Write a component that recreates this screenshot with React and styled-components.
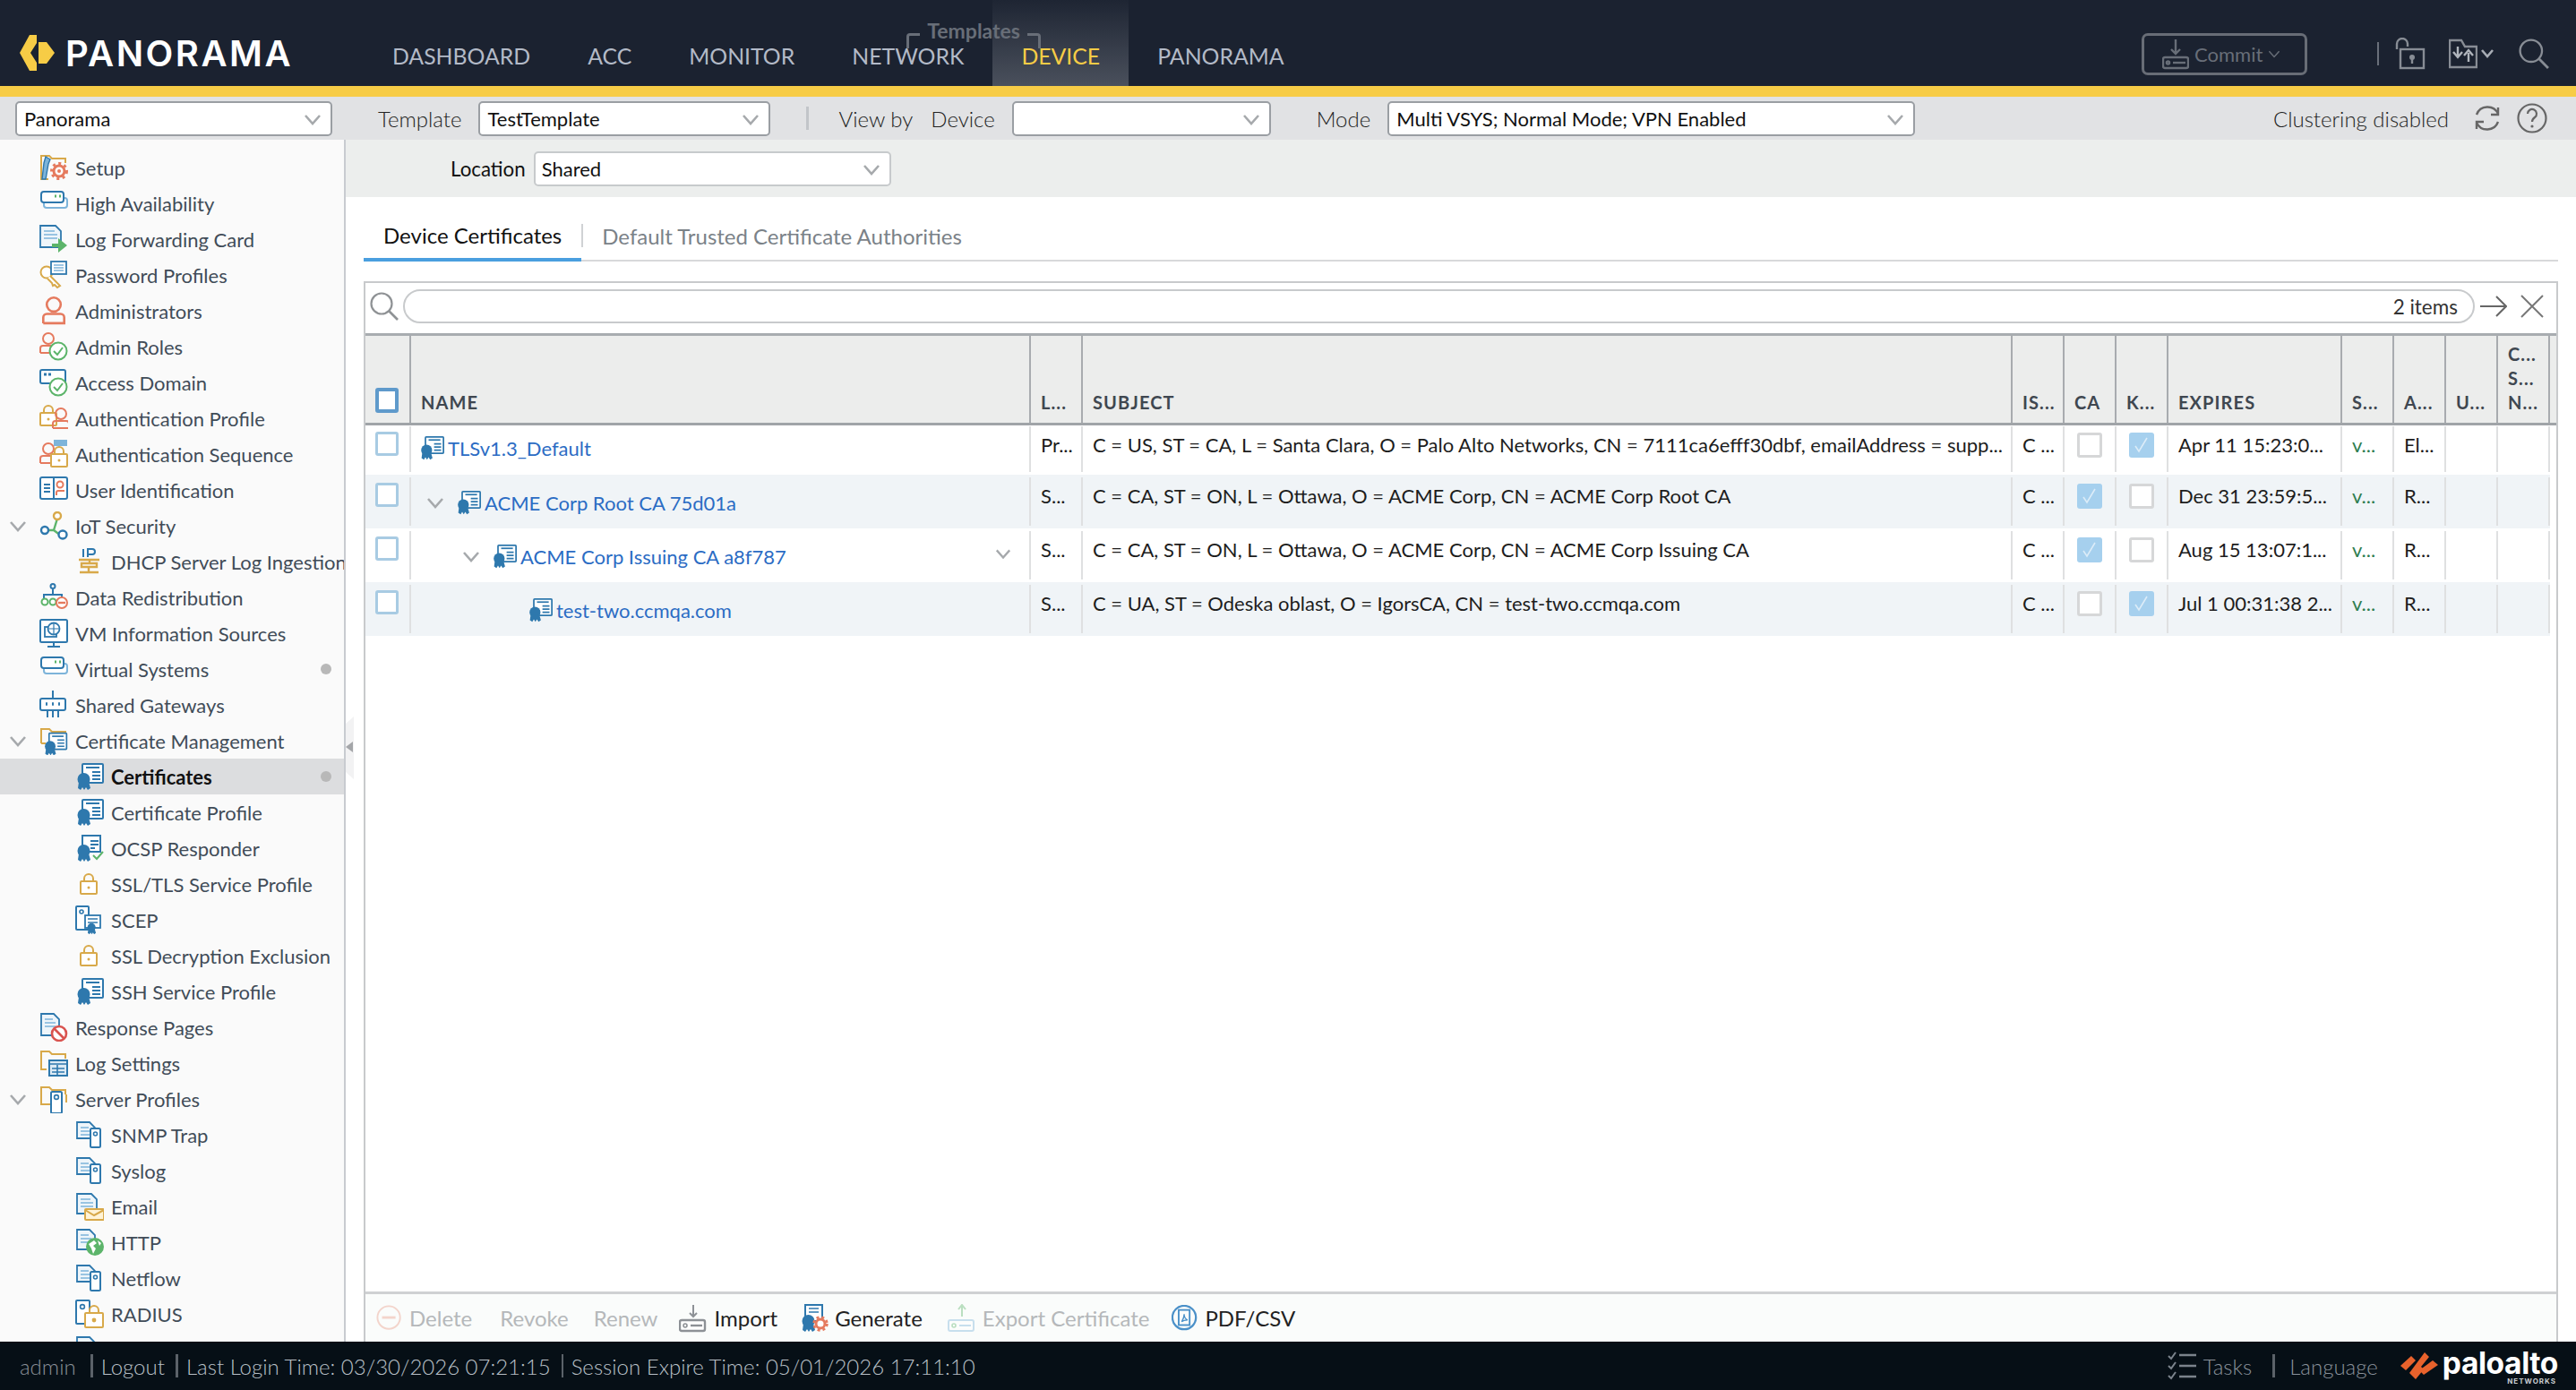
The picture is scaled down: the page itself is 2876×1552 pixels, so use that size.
import React from 'react';
import styled, { createGlobalStyle } from 'styled-components';

const BLUE = '#2e78ad';
const SKY = '#7db4da';
const AMBER = '#d8a94a';
const RED = '#e57a5e';
const GREEN = '#5cb46a';

const GlobalStyle = createGlobalStyle`
    html, body, #root {
        margin: 0;
        height: 100%;
    }
    body {
        font-family: Lato, "Open Sans", sans-serif;
        font-size: 22px;
        color: #222;
        background: #fff;
        overflow: hidden;
    }
    * {
        box-sizing: border-box;
    }
`;

const Page = styled.div`
    display: flex;
    flex-direction: column;
    height: 100vh;
`;

/* top bar */
const TopBar = styled.header`
    display: flex;
    align-items: stretch;
    height: 108px;
    flex: none;
    background: #1b2230;
    border-bottom: 12px solid #f7cc46;
`;

const Brand = styled.div`
    display: flex;
    align-items: center;
    width: 406px;
    padding: 22px 0 0 22px;
    gap: 11px;
    flex: none;
`;

const BrandName = styled.span`
    font-family: Inter, sans-serif;
    font-weight: 600;
    font-size: 40px;
    letter-spacing: 2.5px;
    color: #fff;
`;

const Nav = styled.nav`
    display: flex;
    align-items: stretch;
`;

const NavTab = styled.div`
    position: relative;
    display: flex;
    align-items: flex-end;
    padding: 0 32px 18px;
    font-size: 24.8px;
    line-height: 30px;
    color: ${p => (p.$active ? '#f7cc46' : '#b3bac7')};
    background: ${p => (p.$active ? 'linear-gradient(#1e2533, #4a505c)' : 'none')};
`;

const TemplatesTag = styled.span`
    position: absolute;
    z-index: 2;
    left: 93px;
    top: 21px;
    display: flex;
    align-items: flex-start;
    gap: 8px;
    font-size: 23px;
    font-weight: 700;
    line-height: 26px;
    color: #686e78;
    white-space: nowrap;
    &::before, &::after {
        content: '';
        width: 12px;
        height: 14px;
        margin-top: 16px;
        border-top: 3px solid #686e78;
    }
    &::before {
        border-left: 3px solid #686e78;
        border-top-left-radius: 4px;
    }
    &::after {
        border-right: 3px solid #686e78;
        border-top-right-radius: 4px;
    }
`;

const TopActions = styled.div`
    margin-left: auto;
    display: flex;
    align-items: center;
    padding: 24px 30px 0 0;
`;

const CommitButton = styled.button`
    display: flex;
    align-items: center;
    gap: 6px;
    width: 185px;
    height: 47px;
    padding: 0 0 0 20px;
    margin-right: 78px;
    background: none;
    border: 3px solid #686d76;
    border-radius: 7px;
    font: inherit;
    font-size: 22px;
    color: #686e78;
`;

const TopDivider = styled.span`
    width: 2px;
    height: 26px;
    margin-right: 18px;
    background: #6a707a;
`;

const LockIcon = styled.svg`
    flex: none;
    display: block;
    margin-right: 26px;
`;

const MenuCaret = styled.svg`
    flex: none;
    display: block;
    margin: 0 26px 0 2px;
`;

/* context toolbar */
const ContextBar = styled.div`
    display: flex;
    align-items: center;
    height: 48px;
    flex: none;
    padding-left: 17px;
    background: #e1e2e4;
`;

const FieldLabel = styled.span`
    margin: 0 ${p => p.$mr || 0}px 0 ${p => p.$ml || 0}px;
    font-size: 24px;
    font-weight: 300;
    color: #222;
    white-space: nowrap;
`;

const DarkLabel = styled.span`
    font-size: 22.3px;
    color: #111;
    white-space: nowrap;
`;

const Select = styled.div`
    position: relative;
    display: flex;
    align-items: center;
    width: ${p => p.$w}px;
    height: 39px;
    margin-left: ${p => p.$ml || 0}px;
    padding-left: ${p => p.$soft ? 7 : 8}px;
    background: #fff;
    border: 2px solid ${p => (p.$soft ? '#c7cacc' : '#9a9ea3')};
    border-radius: 5px;
    color: #111;
    svg {
        position: absolute;
        right: 10px;
        top: 8px;
    }
`;

const ContextRight = styled.div`
    margin-left: auto;
    display: flex;
    align-items: center;
    gap: 17px;
    padding-right: 32px;
`;

const VerticalRule = styled.span`
    width: 3px;
    height: 26px;
    margin-left: 40px;
    background: #c2c5c9;
`;

/* main */
const Main = styled.div`
    flex: 1;
    display: flex;
    min-height: 0;
`;

const Sidebar = styled.aside`
    width: 386px;
    flex: none;
    padding-top: 11px;
    overflow: hidden;
    background: #fafafa;
    border-right: 2px solid #c8cbd0;
`;

const TreeRow = styled.div`
    position: relative;
    display: flex;
    align-items: center;
    gap: 8px;
    height: 40px;
    padding-left: ${p => (p.$level === 2 ? 84 : 44)}px;
    white-space: nowrap;
    overflow: hidden;
    color: ${p => (p.$selected ? '#111' : '#414c58')};
    font-weight: ${p => (p.$selected ? 700 : 400)};
    background: ${p => (p.$selected ? '#dcdddf' : 'none')};
`;

const Twist = styled.span`
    position: absolute;
    left: 10px;
    top: 10px;
    display: flex;
`;

const Dot = styled.span`
    position: absolute;
    right: 14px;
    top: 14px;
    width: 12px;
    height: 12px;
    border-radius: 50%;
    background: #b8b8b8;
`;

const Content = styled.section`
    position: relative;
    flex: 1;
    min-width: 0;
    display: flex;
    flex-direction: column;
`;

const CollapseHandle = styled.div`
    position: absolute;
    left: 0;
    top: 644px;
    width: 9px;
    height: 70px;
    background: #f2f2f3;
    clip-path: polygon(0 8px, 100% 0, 100% 100%, 0 calc(100% - 8px));
    &::after {
        content: '';
        position: absolute;
        left: 0;
        top: 28px;
        border: 6px solid transparent;
        border-left: 0;
        border-right: 8px solid #a4a6a9;
    }
`;

const LocationBar = styled.div`
    display: flex;
    align-items: center;
    gap: 9px;
    height: 64px;
    flex: none;
    padding-left: 117px;
    background: #eceeed;
`;

const TabStrip = styled.div`
    display: flex;
    align-items: stretch;
    height: 72px;
    flex: none;
    margin: 0 20px 22px 20px;
    padding-top: 14px;
    border-bottom: 2px solid #d8d9da;
    font-size: 24px;
`;

const Tab = styled.div`
    position: relative;
    display: flex;
    align-items: center;
    height: 55px;
    padding: 3px ${p => (p.$active ? 22 : 21)}px 0;
    color: ${p => (p.$active ? '#111' : '#7b8288')};
    ${p => p.$active && `
        border-bottom: 4px solid #4a9fdf;
        margin-bottom: -2px;
        height: 58px;
    `}
`;

const TabRule = styled.span`
    width: 2px;
    height: 26px;
    margin-top: 16px;
    background: #d0d2d4;
`;

const Panel = styled.div`
    flex: 1;
    min-height: 0;
    display: flex;
    flex-direction: column;
    margin: 0 20px;
    border: 2px solid #c8cacc;
    border-bottom: 0;
`;

const SearchBar = styled.div`
    display: flex;
    align-items: center;
    height: 56px;
    flex: none;
    padding: 0 0 4px 5px;
`;

const SearchField = styled.div`
    flex: 1;
    display: flex;
    align-items: center;
    justify-content: flex-end;
    height: 38px;
    margin-left: 5px;
    padding-right: 17px;
    border: 2px solid #c8cacc;
    border-radius: 19px;
    font-size: 22.5px;
    color: #333;
`;

const SearchTools = styled.div`
    display: flex;
    align-items: center;
    gap: 15px;
    padding: 0 14px 0 6px;
`;

const COLS = '51px 692px 58px 1038px 58px 58px 58px 194px 58px 58px 58px 58px 1fr';

const HeadRow = styled.div`
    display: grid;
    grid-template-columns: ${COLS};
    height: 103px;
    flex: none;
    background: #ecedec;
    border-top: 3px solid #a8acb0;
    border-bottom: 3px solid #a0a4a8;
`;

const HeadCell = styled.div`
    display: flex;
    align-items: flex-end;
    padding: 0 8px 9px 11px;
    border-right: 2px solid #a8abaf;
    font-size: 20px;
    font-weight: 700;
    letter-spacing: 1.1px;
    line-height: 27px;
    color: #3f4750;
    &:last-child {
        border-right: 0;
    }
`;

const HeadCheckCell = styled(HeadCell)`
    padding: 0 0 11px 11px;
`;

const Rows = styled.div`
    flex: 1;
    min-height: 0;
    margin-right: 7px;
`;

const Row = styled.div`
    display: grid;
    grid-template-columns: ${COLS};
    height: ${p => (p.$first ? 55 : 60)}px;
    padding: ${p => (p.$first ? 1 : 3)}px 0 3px;
    background: ${p => (p.$even ? '#f0f4f7' : '#fff')};
`;

const Cell = styled.div`
    padding: 6px 6px 0 11px;
    border-right: 2px solid #dfe0e1;
    line-height: 30px;
    color: ${p => p.$color || '#1d1d1d'};
    white-space: nowrap;
    overflow: hidden;
    text-overflow: ellipsis;
`;

const CheckCell = styled(Cell)`
    padding: 6px 0 0 11px;
`;

const BoolCell = styled(Cell)`
    display: flex;
    justify-content: center;
    padding: 7px 0 0;
`;

const Checkbox = styled.div`
    width: 26px;
    height: 27px;
    border: 3px solid ${p => p.$tone || '#a8cbe3'};
    border-radius: 3px;
    background: #fff;
`;

const HeadCheckbox = styled(Checkbox)`
    height: 28px;
    border: 4px solid #5f9acb;
`;

const Flag = styled.div`
    display: flex;
    align-items: center;
    justify-content: center;
    width: 28px;
    height: 28px;
    border-radius: 3px;
    border: ${p => (p.$on ? '0' : '3px solid #d6d7d8')};
    background: ${p => (p.$on ? '#a6d0ee' : '#fff')};
`;

const NameCell = styled.div`
    display: flex;
    align-items: center;
    height: 30px;
    margin-top: ${p => p.$top}px;
    padding: 0 20px 0 9px;
    gap: 4px;
    color: #2b6cc4;
    white-space: nowrap;
`;

const NameWrap = styled.div`
    border-right: 2px solid #dfe0e1;
`;

const Indent = styled.span`
    display: flex;
    justify-content: flex-end;
    width: ${p => p.$w}px;
    padding-right: 9px;
    flex: none;
`;

const RowMenu = styled.span`
    margin-left: auto;
    display: flex;
    margin-top: -6px;
`;

const ActionBar = styled.div`
    display: flex;
    align-items: center;
    gap: 27px;
    height: 56px;
    flex: none;
    padding: 0 0 0 12px;
    background: #fafcfb;
    border-top: 3px solid #cfd1d3;
    font-size: 24px;
`;

const Action = styled.div`
    display: flex;
    align-items: center;
    gap: 7px;
    margin-right: ${p => p.$mr || 0}px;
    color: ${p => (p.$off ? '#b5b8ba' : '#222')};
`;

/* footer */
const Footer = styled.footer`
    display: flex;
    align-items: center;
    height: 54px;
    flex: none;
    padding: 0 20px 0 22px;
    background: #060f16;
    color: #b9c0c7;
    font-size: 24px;
    font-weight: 300;
`;

const FootRule = styled.span`
    width: ${p => p.$w || 3}px;
    height: 26px;
    margin: 0 ${p => p.$right || 9}px 0 ${p => p.$left || 12}px;
    background: #5b6269;
`;

const UserName = styled.span`
    color: #8a9098;
`;

const FootRight = styled.div`
    margin-left: auto;
    display: flex;
    align-items: center;
    color: #8a929b;
`;

const TasksLabel = styled.span`
    margin-left: 8px;
`;

const LanguageLabel = styled.span`
    margin-right: 25px;
`;

const PaloWord = styled.span`
    position: relative;
    margin-left: 5px;
    font-family: Inter, sans-serif;
    font-weight: 700;
    font-size: 33.5px;
    letter-spacing: -0.4px;
    line-height: 34px;
    color: #fff;
    padding-bottom: 6px;
    small {
        position: absolute;
        right: 2px;
        bottom: -1px;
        font-size: 8px;
        line-height: 8px;
        letter-spacing: 1px;
        color: #c9ccd0;
    }
`;

const Svg = styled.svg`
    flex: none;
    display: block;
`;

const seal = (c = BLUE) => (
    <g fill={c}>
        <circle cx="9.5" cy="19" r="7" />
        <path d="M4 22h11l2 7-3 2-2-3-2 3-2-3-2 3-3-2z" />
    </g>
);

const doc = (x, y, w, h) => (
    <g stroke={BLUE} strokeWidth="1.8" fill="#eef5fa">
        <path d={`M${x} ${y + h}V${y}h${w - 6}l6 6v${h - 6}z`} />
        <path d={`M${x + 4} ${y + 6}h${w - 11}M${x + 4} ${y + 10}h${w - 8}M${x + 4} ${y + 14}h${w - 8}`} strokeWidth="1.5" stroke={SKY} />
    </g>
);

const folder = <path d="M2 19V3h9l3 3h15v5" stroke={AMBER} strokeWidth="2" fill="none" />;

const cert = (
    <>
        <rect x="8" y="2" width="23" height="21" rx="1" fill="#fff" stroke={BLUE} strokeWidth="2" />
        <path d="M12 6h15" stroke={BLUE} strokeWidth="2" />
        <path d="M19 11h9M19 15h9M19 19h9" stroke={BLUE} strokeWidth="1.8" />
        {seal()}
    </>
);

const lockShape = (x, y, c = AMBER) => (
    <g stroke={c} strokeWidth="2" fill="#fff">
        <rect x={x} y={y + 8} width="18" height="14" rx="1" />
        <path d={`M${x + 4} ${y + 8}V${y + 5}a5 5 0 0 1 10 0v3`} fill="none" />
        <circle cx={x + 9} cy={y + 15} r="1.5" fill={c} stroke="none" />
    </g>
);

const person = (x, y, c = RED) => (
    <g stroke={c} strokeWidth="2" fill="none">
        <circle cx={x + 10} cy={y + 6} r="6" />
        <path d={`M${x + 1} ${y + 22}v-5a3 3 0 0 1 3-3h12a3 3 0 0 1 3 3v5h-6M${x + 1} ${y + 22}h12`} />
    </g>
);

const checkBadge = (
    <g>
        <circle cx="21" cy="21" r="9.5" fill="#fff" stroke={GREEN} strokeWidth="2" />
        <path d="M16 21l4 4 6-8" stroke={GREEN} strokeWidth="2" fill="none" />
    </g>
);

const stacked = (
    <g stroke={BLUE} strokeWidth="2" fill="#fff">
        <rect x="5" y="10" width="26" height="11" rx="3" stroke={SKY} />
        <rect x="2" y="3" width="25" height="12" rx="3" />
        <path d="M17 8h2M22 8h2" stroke={GREEN} strokeWidth="3" />
    </g>
);

const serverDoc = (
    <>
        {doc(2, 2, 20, 18)}
        <rect x="17" y="9" width="11" height="21" rx="1.5" fill="#fff" stroke={BLUE} strokeWidth="2" />
        <circle cx="22.5" cy="15" r="2" fill="none" stroke={BLUE} strokeWidth="1.6" />
    </>
);

const GLYPHS = {
    setup: (
        <>
            {folder}
            <path d="M2 19v10h8" stroke={AMBER} strokeWidth="2" fill="none" />
            <path d="M7 4l5 3-2 5-3 17H3l2-18z" fill={SKY} stroke={BLUE} strokeWidth="1.4" />
            <circle cx="22" cy="20" r="6" fill="#fff" stroke={RED} strokeWidth="3" />
            <circle cx="22" cy="20" r="8.5" fill="none" stroke={RED} strokeWidth="3" strokeDasharray="3 3.5" />
            <circle cx="22" cy="20" r="2" fill={RED} />
        </>
    ),
    ha: stacked,
    logfwd: (
        <>
            {doc(1, 1, 23, 24)}
            <path d="M14 24h7v-6l10 8-10 8v-6h-7z" fill={GREEN} transform="translate(0 -3)" />
        </>
    ),
    password: (
        <>
            <g stroke={AMBER} strokeWidth="2" fill="#fff">
                <circle cx="8" cy="13" r="6.5" />
                <path d="M12 17l11 11-3 2-3-3-2 1-1-3-5-5" />
            </g>
            <rect x="13" y="1" width="17" height="14" fill="#fff" stroke={BLUE} strokeWidth="1.8" />
            <path d="M16 5h11M16 8h11M16 11h11" stroke={SKY} strokeWidth="1.5" />
        </>
    ),
    admin: <g transform="translate(3 0) scale(1.3)">{person(0, 1)}</g>,
    roles: (
        <>
            {person(0, 1)}
            {checkBadge}
        </>
    ),
    domain: (
        <>
            <rect x="1" y="2" width="28" height="15" rx="2" fill="#fff" stroke={BLUE} strokeWidth="2" />
            <path d="M5 7h3M10 7h3" stroke={BLUE} strokeWidth="3" />
            {checkBadge}
        </>
    ),
    authProfile: (
        <>
            {lockShape(1, 2)}
            {person(14, 5)}
        </>
    ),
    authSeq: (
        <>
            {person(0, 4)}
            <rect x="16" y="0" width="15" height="7" fill={SKY} />
            {lockShape(13, 8)}
        </>
    ),
    userId: (
        <>
            <rect x="1" y="2" width="30" height="24" rx="2" fill="#fff" stroke={BLUE} strokeWidth="2" />
            <path d="M16 2v24M5 10h7M5 14h7M5 18h7" stroke={BLUE} strokeWidth="2" />
            <circle cx="23" cy="10" r="3.5" fill="none" stroke={RED} strokeWidth="2" />
            <path d="M19 22v-3a2 2 0 0 1 2-2h7" fill="none" stroke={RED} strokeWidth="2" />
        </>
    ),
    iot: (
        <g strokeWidth="2.4" fill="#fff">
            <path d="M20 8l-4 13M7 21h9M16 21l8 6" stroke={GREEN} />
            <circle cx="20" cy="5" r="4" stroke={AMBER} />
            <circle cx="6" cy="21" r="4" stroke={BLUE} />
            <circle cx="26" cy="26" r="4.5" stroke={BLUE} />
        </g>
    ),
    dhcp: (
        <g stroke={AMBER} strokeWidth="2.4" fill="none">
            <path d="M4 14h23M16 14v4M7 18h17v4H7zM15 22v6M5 28h21" />
            <path d="M9 2v9M14 11V2h5a3 3 0 0 1 0 6h-5" stroke={BLUE} strokeWidth="2" />
        </g>
    ),
    redist: (
        <>
            <circle cx="15" cy="3.5" r="2.5" fill="none" stroke={BLUE} strokeWidth="2" />
            <path d="M15 7v6M5 17v-4h20v4" fill="none" stroke={BLUE} strokeWidth="2" />
            <circle cx="6" cy="21" r="3.5" fill="#fff" stroke={GREEN} strokeWidth="2" />
            <circle cx="15" cy="21" r="3.5" fill="#fff" stroke={GREEN} strokeWidth="2" />
            <circle cx="25" cy="22" r="6" fill="#fff" stroke={RED} strokeWidth="2" />
            <path d="M21 22h8" stroke={RED} strokeWidth="2.4" />
        </>
    ),
    vm: (
        <>
            <rect x="1" y="1" width="30" height="25" rx="1.5" fill="#fff" stroke={BLUE} strokeWidth="2" />
            <path d="M16 26v4M9 31h14" stroke={BLUE} strokeWidth="2" />
            <rect x="6" y="9" width="13" height="11" fill="none" stroke={BLUE} strokeWidth="1.8" />
            <circle cx="16" cy="11" r="6.5" fill="#fff" stroke={BLUE} strokeWidth="1.8" />
            <path d="M10 11h12M16 5v12" stroke={BLUE} strokeWidth="1.2" />
        </>
    ),
    gateway: (
        <g stroke={BLUE} strokeWidth="2" fill="none">
            <path d="M15 0v8M9 22v8M15 22v8M21 22v8" />
            <rect x="1" y="9" width="28" height="13" rx="2" fill="#fff" />
            <path d="M7 15h2M14 15h2M21 15h2" strokeWidth="3.4" />
        </g>
    ),
    certMgmt: (
        <>
            {folder}
            <path d="M2 19h5" stroke={AMBER} strokeWidth="2" />
            <g transform="translate(4 6) scale(.85)">{cert}</g>
        </>
    ),
    cert,
    ocsp: (
        <>
            <rect x="8" y="2" width="20" height="18" fill="#fff" stroke={BLUE} strokeWidth="2" />
            <path d="M17 8h9M17 12h9M17 16h5" stroke={BLUE} strokeWidth="1.8" />
            {seal()}
            <path d="M20 24l4 4 7-8" stroke={GREEN} strokeWidth="2" fill="none" />
        </>
    ),
    lock: lockShape(6, 5),
    scep: (
        <>
            <rect x="1" y="1" width="14" height="26" rx="1" fill="#fff" stroke={BLUE} strokeWidth="2" />
            <circle cx="7" cy="7" r="2" fill="none" stroke={BLUE} strokeWidth="1.6" />
            <rect x="11" y="11" width="17" height="14" fill="#fff" stroke={BLUE} strokeWidth="1.8" />
            <path d="M14 15h11M14 19h11" stroke={BLUE} strokeWidth="1.5" />
            <g transform="translate(12 12) scale(.65)">{seal()}</g>
        </>
    ),
    response: (
        <>
            {doc(2, 1, 20, 24)}
            <circle cx="22" cy="23" r="8" fill="#fff" stroke="#d9534f" strokeWidth="2.6" />
            <path d="M16.5 17.5l11 11" stroke="#d9534f" strokeWidth="2.6" />
        </>
    ),
    logSettings: (
        <>
            {folder}
            <path d="M2 19v4h6" stroke={AMBER} strokeWidth="2" fill="none" />
            <rect x="11" y="13" width="20" height="17" fill="#dceaf4" stroke={BLUE} strokeWidth="2" />
            <path d="M11 17h20M14 22h14M14 26h14M20 18v11" stroke={BLUE} strokeWidth="1.6" />
        </>
    ),
    serverFolder: (
        <>
            {folder}
            <path d="M2 19v3h10M30 11v9" stroke={AMBER} strokeWidth="2" fill="none" />
            <rect x="13" y="8" width="12" height="24" rx="1.5" fill="#fff" stroke={BLUE} strokeWidth="2" />
            <circle cx="19" cy="14" r="2.4" fill="none" stroke={BLUE} strokeWidth="1.6" />
        </>
    ),
    serverDoc,
    email: (
        <>
            {doc(2, 2, 22, 22)}
            <rect x="11" y="19" width="21" height="12" rx="1" fill="#fff3d6" stroke={AMBER} strokeWidth="2" />
            <path d="M11 20l10 6 11-6" fill="none" stroke={AMBER} strokeWidth="2" />
        </>
    ),
    http: (
        <>
            {doc(2, 2, 20, 22)}
            <circle cx="22" cy="21" r="10" fill={GREEN} />
            <path d="M15 18l6-4 3 3-4 3 3 3-3 6-2-6zM25 14l4 3-2 3z" fill="#fff" />
        </>
    ),
    radius: (
        <>
            <rect x="1" y="1" width="15" height="26" rx="1" fill="#fff" stroke={BLUE} strokeWidth="2" />
            <circle cx="8" cy="8" r="2.4" fill="none" stroke={BLUE} strokeWidth="1.6" />
            <rect x="11" y="15" width="20" height="16" rx="1" fill="#fff" stroke={AMBER} strokeWidth="2" />
            <path d="M16 15v-3a5 5 0 0 1 10 0v3" fill="none" stroke={AMBER} strokeWidth="2" />
            <circle cx="21" cy="23" r="2.4" fill={AMBER} />
        </>
    ),
    export: (
        <g opacity=".4">
            <path d="M16 14V1M12 6l4-5 4 5" stroke={GREEN} strokeWidth="2" fill="none" />
            <rect x="1" y="18" width="28" height="12" rx="2" fill="#fff" stroke={SKY} strokeWidth="2" />
            <circle cx="7" cy="24" r="2" fill="none" stroke={GREEN} strokeWidth="1.6" />
            <path d="M13 24h13" stroke={SKY} strokeWidth="2" />
        </g>
    ),
    import: (
        <g>
            <path d="M16 14V1M12 10l4 4 4-4" stroke="#8d9196" strokeWidth="2" fill="none" />
            <rect x="1" y="18" width="28" height="12" rx="2" fill="#fff" stroke="#8d9196" strokeWidth="2.4" />
            <circle cx="7" cy="24" r="2" fill="none" stroke="#8d9196" strokeWidth="1.6" />
            <path d="M13 24h13" stroke="#8d9196" strokeWidth="2.4" />
        </g>
    ),
    generate: (
        <>
            <rect x="6" y="1" width="19" height="18" fill="#fff" stroke={BLUE} strokeWidth="2" />
            <path d="M10 5h11M10 9h11" stroke={BLUE} strokeWidth="1.6" />
            {seal()}
            <circle cx="23" cy="22" r="5" fill="#fff" stroke={RED} strokeWidth="3" />
            <circle cx="23" cy="22" r="7.4" fill="none" stroke={RED} strokeWidth="2.6" strokeDasharray="3 3" />
        </>
    ),
    delete: (
        <g opacity=".3">
            <circle cx="15" cy="15" r="13.5" fill="none" stroke={RED} strokeWidth="2" />
            <path d="M7 15h16" stroke={RED} strokeWidth="3" />
        </g>
    ),
    pdf: (
        <g fill="none" stroke="#4a90c8">
            <circle cx="15" cy="15" r="14" strokeWidth="2.4" />
            <rect x="8.5" y="6" width="13" height="18" strokeWidth="2" />
            <path d="M12 20c2-3 3-6 3-9 0 3 2 6 4 7-2 0-5 0-7 2z" strokeWidth="1.4" />
        </g>
    ),
};

const Icon = ({ name, size = 32 }) => (
    <Svg width={size} height={size} viewBox="0 0 32 32">
        {GLYPHS[name]}
    </Svg>
);

const Chevron = ({ size = 20, color = '#a6a9ac', sw = 2.6 }) => (
    <Svg width={size} height={size} viewBox="0 0 20 20">
        <path d="M2 6l8 9 8-9" fill="none" stroke={color} strokeWidth={sw} />
    </Svg>
);

const SearchGlass = ({ size, color }) => (
    <Svg width={size} height={size} viewBox="0 0 32 32">
        <circle cx="13" cy="13" r="11.5" fill="none" stroke={color} strokeWidth="2.2" />
        <path d="M21 21l10 10" stroke={color} strokeWidth="2.6" />
    </Svg>
);

const PanoramaMark = () => (
    <Svg width="40" height="40" viewBox="0 0 40 40">
        <path d="M11 0h8v9l-7 11 7 11v9h-8L0 20z" fill="#f7cc46" />
        <path d="M21 8h9l9 12-9 12h-9z" fill="#f7cc46" />
    </Svg>
);

const PaloMark = () => (
    <Svg width="42" height="32" viewBox="0 0 42 32">
        <g fill="#e8622c">
            <path d="M0 16L12 5l5 5L6 21z" />
            <path d="M10 24L27 1l5 5-9 11 3 3-9 11z" />
            <path d="M26 26l-5-5 15-11 6 5z" />
        </g>
    </Svg>
);

const TasksIcon = () => (
    <Svg width="32" height="32" viewBox="0 0 32 32">
        <g fill="none" stroke="#7b838c" strokeWidth="2.6">
            <path d="M1 5l3 3 5-7M1 16l3 3 5-7M1 27l3 3 5-7" strokeWidth="2" />
            <path d="M13 4h19M13 16h19M13 28h19" />
        </g>
    </Svg>
);

const navItems = ['DASHBOARD', 'ACC', 'MONITOR', 'NETWORK', 'DEVICE', 'PANORAMA'];

const tree = [
    { label: 'Setup', icon: 'setup' },
    { label: 'High Availability', icon: 'ha' },
    { label: 'Log Forwarding Card', icon: 'logfwd' },
    { label: 'Password Profiles', icon: 'password' },
    { label: 'Administrators', icon: 'admin' },
    { label: 'Admin Roles', icon: 'roles' },
    { label: 'Access Domain', icon: 'domain' },
    { label: 'Authentication Profile', icon: 'authProfile' },
    { label: 'Authentication Sequence', icon: 'authSeq' },
    { label: 'User Identification', icon: 'userId' },
    { label: 'IoT Security', icon: 'iot', open: true },
    { label: 'DHCP Server Log Ingestion', icon: 'dhcp', level: 2 },
    { label: 'Data Redistribution', icon: 'redist' },
    { label: 'VM Information Sources', icon: 'vm' },
    { label: 'Virtual Systems', icon: 'ha', dot: true },
    { label: 'Shared Gateways', icon: 'gateway' },
    { label: 'Certificate Management', icon: 'certMgmt', open: true },
    { label: 'Certificates', icon: 'cert', level: 2, selected: true, dot: true },
    { label: 'Certificate Profile', icon: 'cert', level: 2 },
    { label: 'OCSP Responder', icon: 'ocsp', level: 2 },
    { label: 'SSL/TLS Service Profile', icon: 'lock', level: 2 },
    { label: 'SCEP', icon: 'scep', level: 2 },
    { label: 'SSL Decryption Exclusion', icon: 'lock', level: 2 },
    { label: 'SSH Service Profile', icon: 'cert', level: 2 },
    { label: 'Response Pages', icon: 'response' },
    { label: 'Log Settings', icon: 'logSettings' },
    { label: 'Server Profiles', icon: 'serverFolder', open: true },
    { label: 'SNMP Trap', icon: 'serverDoc', level: 2 },
    { label: 'Syslog', icon: 'serverDoc', level: 2 },
    { label: 'Email', icon: 'email', level: 2 },
    { label: 'HTTP', icon: 'http', level: 2 },
    { label: 'Netflow', icon: 'serverDoc', level: 2 },
    { label: 'RADIUS', icon: 'radius', level: 2 },
    { icon: 'serverDoc', level: 2 },
];

const columns = ['NAME', 'L...', 'SUBJECT', 'IS...', 'CA', 'K...', 'EXPIRES', 'S...', 'A...', 'U...', <>C...<br />S...<br />N...</>];

const certs = [
    { name: 'TLSv1.3_Default', level: 0, top: 9, loc: 'Pr...', subject: 'C = US, ST = CA, L = Santa Clara, O = Palo Alto Networks, CN = 7111ca6efff30dbf, emailAddress = supp...', ca: false, key: true, expires: 'Apr 11 15:23:0...', algo: 'El...' },
    { name: 'ACME Corp Root CA 75d01a', level: 1, top: 13, twist: true, loc: 'S...', subject: 'C = CA, ST = ON, L = Ottawa, O = ACME Corp, CN = ACME Corp Root CA', ca: true, key: false, expires: 'Dec 31 23:59:5...', algo: 'R...' },
    { name: 'ACME Corp Issuing CA a8f787', level: 2, top: 13, twist: true, menu: true, loc: 'S...', subject: 'C = CA, ST = ON, L = Ottawa, O = ACME Corp, CN = ACME Corp Issuing CA', ca: true, key: false, expires: 'Aug 15 13:07:1...', algo: 'R...' },
    { name: 'test-two.ccmqa.com', level: 3, top: 13, loc: 'S...', subject: 'C = UA, ST = Odeska oblast, O = IgorsCA, CN = test-two.ccmqa.com', ca: false, key: true, expires: 'Jul 1 00:31:38 2...', algo: 'R...' },
];

const BoolFlag = ({ on }) => (
    <BoolCell>
        <Flag $on={on}>
            {on && (
                <Svg width="22" height="22" viewBox="0 0 22 22">
                    <path d="M4 12l4 6 9-15" fill="none" stroke="#dcecf8" strokeWidth="1.6" />
                </Svg>
            )}
        </Flag>
    </BoolCell>
);

const CertRow = ({ item, index }) => (
    <Row $first={index === 0} $even={index % 2 === 1}>
        <CheckCell>
            <Checkbox />
        </CheckCell>
        <NameWrap>
            <NameCell $top={item.top}>
                {item.level > 0 && (
                    <Indent $w={item.level * 40 - 3}>
                        {item.twist && <Chevron />}
                    </Indent>
                )}
                <Icon name="cert" size={28} />
                <span>{item.name}</span>
                {item.menu && (
                    <RowMenu>
                        <Chevron size={18} />
                    </RowMenu>
                )}
            </NameCell>
        </NameWrap>
        <Cell>{item.loc}</Cell>
        <Cell>{item.subject}</Cell>
        <Cell>C ...</Cell>
        <BoolFlag on={item.ca} />
        <BoolFlag on={item.key} />
        <Cell>{item.expires}</Cell>
        <Cell $color="#2e7d4f">v...</Cell>
        <Cell>{item.algo}</Cell>
        <Cell />
        <Cell />
    </Row>
);

export default function App() {
    return (
        <Page>
            <GlobalStyle />
            <TopBar>
                <Brand>
                    <PanoramaMark />
                    <BrandName>PANORAMA</BrandName>
                </Brand>
                <Nav>
                    {navItems.map(item => (
                        <NavTab key={item} $active={item === 'DEVICE'}>
                            {item === 'NETWORK' && <TemplatesTag>Templates</TemplatesTag>}
                            {item}
                        </NavTab>
                    ))}
                </Nav>
                <TopActions>
                    <CommitButton>
                        <Svg width="30" height="36" viewBox="0 0 30 36">
                            <g fill="none" stroke="#686e78" strokeWidth="2.4">
                                <path d="M15 2v16M10 13l5 5 5-5" />
                                <rect x="1" y="22" width="28" height="12" rx="2" />
                                <path d="M12 28h14" />
                                <circle cx="6.5" cy="28" r="1.6" />
                            </g>
                        </Svg>
                        Commit
                        <Chevron size={14} color="#686e78" sw={2} />
                    </CommitButton>
                    <TopDivider />
                    <LockIcon width="34" height="36" viewBox="0 0 34 36">
                        <g fill="none" stroke="#888d95" strokeWidth="2.4">
                            <rect x="6" y="13" width="26" height="21" />
                            <path d="M2 13V7a6 6 0 0 1 12 0v3" />
                        </g>
                        <circle cx="19" cy="22" r="3" fill="#888d95" />
                        <path d="M19 23v6" stroke="#888d95" strokeWidth="2.4" />
                    </LockIcon>
                    <Svg width="32" height="34" viewBox="0 0 32 34">
                        <g fill="none" stroke="#888d95" strokeWidth="2.4">
                            <path d="M1 32V2h13l4 7h13v23z" />
                        </g>
                        <path d="M10 9v10M5 15l5 6 5-6M22 26V16M17 19l5-6 5 6" fill="none" stroke="#b0b5bc" strokeWidth="2.4" />
                    </Svg>
                    <MenuCaret width="18" height="14" viewBox="0 0 18 14">
                        <path d="M3 3l6 7 6-7" fill="none" stroke="#a8adb5" strokeWidth="2.6" />
                    </MenuCaret>
                    <SearchGlass size={34} color="#888d95" />
                </TopActions>
            </TopBar>

            <ContextBar>
                <Select $w={354}>
                    Panorama
                    <Chevron />
                </Select>
                <FieldLabel $ml={51}>Template</FieldLabel>
                <Select $w={326} $ml={19}>
                    TestTemplate
                    <Chevron />
                </Select>
                <VerticalRule />
                <FieldLabel $ml={33}>View by</FieldLabel>
                <FieldLabel $ml={20}>Device</FieldLabel>
                <Select $w={289} $ml={19}>
                    <Chevron />
                </Select>
                <FieldLabel $ml={51}>Mode</FieldLabel>
                <Select $w={589} $ml={19}>
                    Multi VSYS; Normal Mode; VPN Enabled
                    <Chevron />
                </Select>
                <ContextRight>
                    <FieldLabel $mr={10}>Clustering disabled</FieldLabel>
                    <Svg width="32" height="32" viewBox="0 0 32 32">
                        <g fill="none" stroke="#666" strokeWidth="2.4">
                            <path d="M28 11A13 13 0 0 0 4 12M4 21a13 13 0 0 0 24-1" />
                            <path d="M28 4v8h-8M4 28v-8h8" />
                        </g>
                    </Svg>
                    <Svg width="34" height="34" viewBox="0 0 34 34">
                        <circle cx="17" cy="17" r="15.5" fill="none" stroke="#666" strokeWidth="2.2" />
                        <path d="M12 12a5 5 0 1 1 8 4c-2 1.500-3 2.500-3 5" fill="none" stroke="#666" strokeWidth="2.2" />
                        <circle cx="17" cy="26" r="1.6" fill="#666" />
                    </Svg>
                </ContextRight>
            </ContextBar>

            <Main>
                <Sidebar>
                    {tree.map((item, i) => (
                        <TreeRow key={i} $level={item.level} $selected={item.selected}>
                            {item.open && (
                                <Twist>
                                    <Chevron />
                                </Twist>
                            )}
                            <Icon name={item.icon} />
                            {item.label && <span>{item.label}</span>}
                            {item.dot && <Dot />}
                        </TreeRow>
                    ))}
                </Sidebar>
                <Content>
                    <CollapseHandle />
                    <LocationBar>
                        <DarkLabel>Location</DarkLabel>
                        <Select $w={399} $soft>
                            Shared
                            <Chevron />
                        </Select>
                    </LocationBar>
                    <TabStrip>
                        <Tab $active>Device Certificates</Tab>
                        <TabRule />
                        <Tab>Default Trusted Certificate Authorities</Tab>
                    </TabStrip>
                    <Panel>
                        <SearchBar>
                            <SearchGlass size={32} color="#8f9295" />
                            <SearchField>2 items</SearchField>
                            <SearchTools>
                                <Svg width="30" height="28" viewBox="0 0 30 28">
                                    <path d="M0 14h28M18 3l11 11-11 11" fill="none" stroke="#666" strokeWidth="2" />
                                </Svg>
                                <Svg width="26" height="26" viewBox="0 0 26 26">
                                    <path d="M1 1l24 24M25 1L1 25" fill="none" stroke="#777" strokeWidth="2" />
                                </Svg>
                            </SearchTools>
                        </SearchBar>
                        <HeadRow>
                            <HeadCheckCell>
                                <HeadCheckbox />
                            </HeadCheckCell>
                            {columns.map((col, i) => (
                                <HeadCell key={i}>
                                    <span>{col}</span>
                                </HeadCell>
                            ))}
                            <HeadCell />
                        </HeadRow>
                        <Rows>
                            {certs.map((item, i) => (
                                <CertRow key={item.name} item={item} index={i} />
                            ))}
                        </Rows>
                        <ActionBar>
                            <Action $off $mr={4}>
                                <Icon name="delete" size={30} />
                                Delete
                            </Action>
                            <Action $off $mr={1}>Revoke</Action>
                            <Action $off $mr={-3}>Renew</Action>
                            <Action $mr={-2}>
                                <Icon name="import" size={32} />
                                Import
                            </Action>
                            <Action $mr={1}>
                                <Icon name="generate" size={32} />
                                Generate
                            </Action>
                            <Action $off $mr={-2}>
                                <Icon name="export" size={32} />
                                Export Certificate
                            </Action>
                            <Action>
                                <Icon name="pdf" size={30} />
                                PDF/CSV
                            </Action>
                        </ActionBar>
                    </Panel>
                </Content>
            </Main>

            <Footer>
                <UserName>admin</UserName>
                <FootRule $left={16} />
                <span>Logout</span>
                <FootRule />
                <span>Last Login Time: 03/30/2026 07:21:15</span>
                <FootRule $w={2} />
                <span>Session Expire Time: 05/01/2026 17:11:10</span>
                <FootRight>
                    <TasksIcon />
                    <TasksLabel>Tasks</TasksLabel>
                    <FootRule $left={23} $right={16} />
                    <LanguageLabel>Language</LanguageLabel>
                    <PaloMark />
                    <PaloWord>
                        paloalto
                        <small>NETWORKS</small>
                    </PaloWord>
                </FootRight>
            </Footer>
        </Page>
    );
}
